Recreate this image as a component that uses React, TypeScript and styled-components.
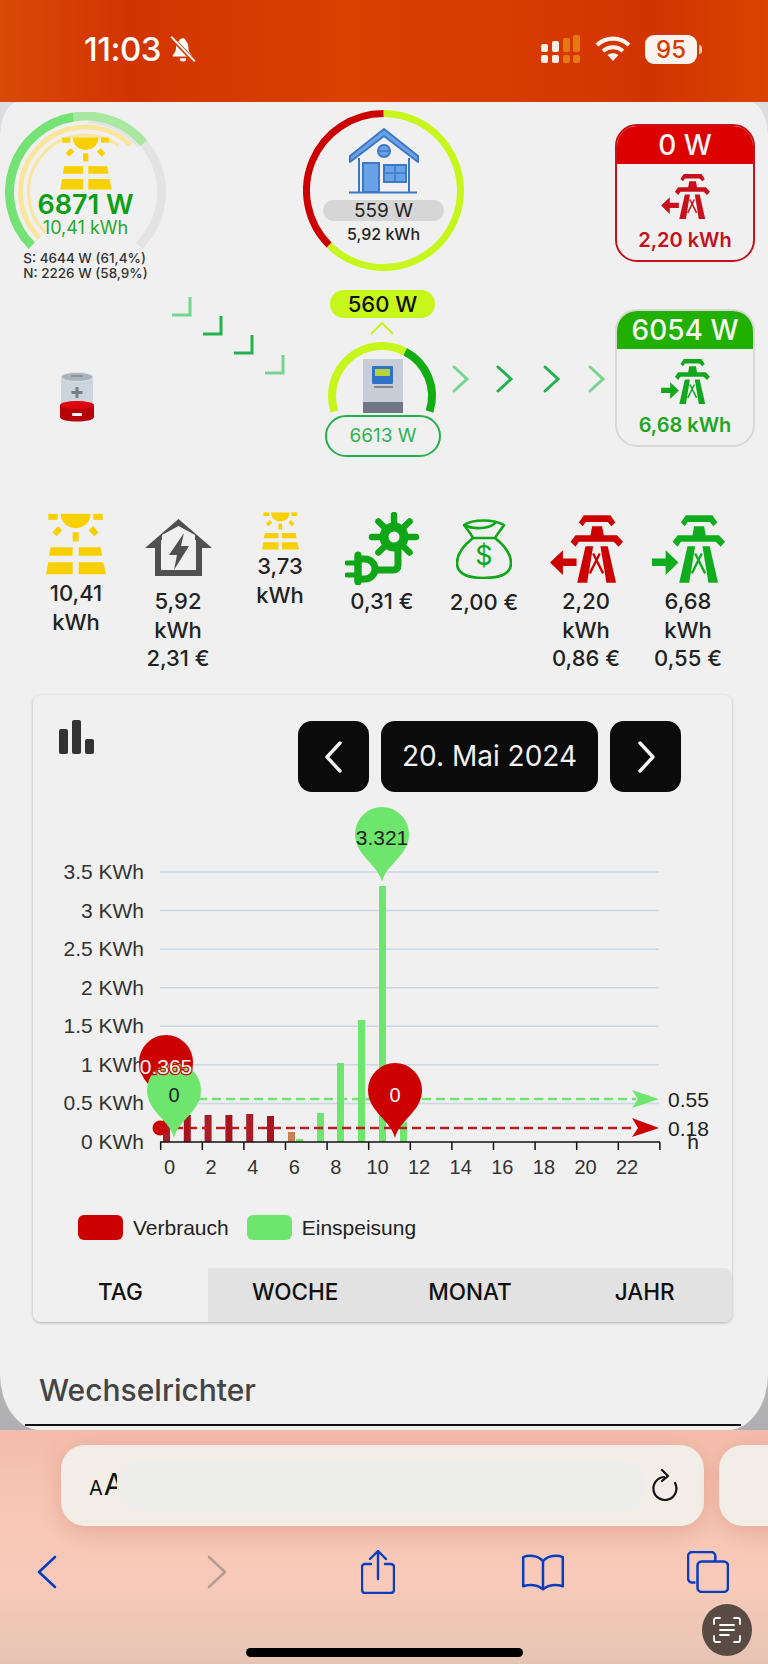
import React from "react";
import styled, { createGlobalStyle } from "styled-components";

const GlobalStyle = createGlobalStyle`
  * { box-sizing: border-box; }
  html, body { margin: 0; padding: 0; background: #b0b0b0; }
  body { font-family: Inter, "Noto Sans", sans-serif; }
`;

const LIME = "#c6f61c";
const GREEN_BAR = "#6ee66e";
const RED = "#cc0000";
const SOLAR = "#f8cf00";
const LINK = "#0a3cc0";

const Screen = styled.div`
  width: 768px;
  height: 1664px;
  overflow: hidden;
  position: relative;
  display: flex;
  flex-direction: column;
  background: linear-gradient(#dcdce2 0, #d4d4d8 60%, #9c9c9c 100%);
`;

/* status bar */
const StatusBar = styled.div`
  height: 102px;
  flex: none;
  display: flex;
  align-items: center;
  padding: 0 71px 4px 84px;
  background: linear-gradient(90deg, #d84a08 0, #d23400 17%, #da4000 45%, #d83c00 65%, #d23400 85%, #d94400 100%);
  color: #fff;
`;
const Clock = styled.span`
  font-size: 33px;
  font-weight: 500;
  letter-spacing: -0.5px;
`;
const BellSlot = styled.span`
  display: flex;
  margin-left: 8px;
  margin-right: auto;
`;
const StatusIcons = styled.div`
  display: flex;
  align-items: center;
  gap: 14px;
`;
const BatteryPill = styled.span`
  width: 52px;
  height: 29px;
  border-radius: 9px;
  background: #faf3ee;
  color: #d63b00;
  font-size: 24px;
  font-weight: 500;
  display: flex;
  align-items: center;
  justify-content: center;
  position: relative;
  &::after {
    content: "";
    position: absolute;
    right: -5px;
    top: 10px;
    width: 3px;
    height: 9px;
    border-radius: 0 3px 3px 0;
    background: #f3c9b2;
  }
`;

/* page */
const Page = styled.div`
  height: 1328px;
  flex: none;
  overflow: hidden;
  background: #f0f0f0;
  border-radius: 18px 18px 40px 40px / 36px 36px 56px 56px;
`;
const Diagram = styled.div`
  position: relative;
  height: 408px;
`;
const FlowArrows = styled.svg`
  position: absolute;
  left: 0;
  top: 0;
`;
const GaugeArt = styled.svg`
  position: absolute;
  left: 0;
  top: 0;
`;
const SolarNode = styled.div`
  position: absolute;
  left: 5px;
  top: 10px;
  width: 161px;
  height: 170px;
  display: flex;
  flex-direction: column;
  align-items: center;
  padding-top: 25px;
`;
const SolarPower = styled.div`
  position: relative;
  margin-top: 1px;
  font-size: 27px;
  line-height: 28px;
  font-weight: 600;
  color: #0a9f14;
`;
const SolarEnergy = styled.div`
  position: relative;
  font-size: 18px;
  line-height: 17px;
  color: #27a827;
`;
const StringLines = styled.div`
  position: relative;
  margin-top: 15px;
  font-size: 13.5px;
  line-height: 15px;
  font-weight: 500;
  white-space: nowrap;
  color: #333;
`;
const HouseNode = styled.div`
  position: absolute;
  left: 303px;
  top: 8px;
  width: 161px;
  height: 161px;
  display: flex;
  flex-direction: column;
  align-items: center;
  padding-top: 17px;
`;
const HousePower = styled.div`
  position: relative;
  margin-top: 6px;
  width: 121px;
  height: 21px;
  border-radius: 11px;
  background: #d6d6d6;
  font-size: 19px;
  line-height: 21px;
  text-align: center;
  color: #222;
`;
const HouseEnergy = styled.div`
  position: relative;
  margin-top: 3px;
  font-size: 16px;
  line-height: 20px;
  font-weight: 500;
  color: #222;
`;
const GridCard = styled.div<{ $top: number; $border: string }>`
  position: absolute;
  left: 615px;
  top: ${(p) => p.$top}px;
  width: 140px;
  height: 138px;
  border-radius: 22px;
  border: 2px solid ${(p) => p.$border};
  overflow: hidden;
  display: flex;
  flex-direction: column;
  align-items: center;
`;
const GridHeader = styled.div<{ $bg: string }>`
  align-self: stretch;
  height: 38px;
  background: ${(p) => p.$bg};
  color: #f4f4f4;
  font-size: 28px;
  font-weight: 500;
  line-height: 38px;
  text-align: center;
`;
const GridIcon = styled.div`
  margin-top: 10px;
  display: flex;
`;
const GridEnergy = styled.div<{ $color: string }>`
  margin-top: 9px;
  font-size: 20px;
  line-height: 24px;
  font-weight: 600;
  color: ${(p) => p.$color};
`;
const LoadPill = styled.div`
  position: absolute;
  left: 330px;
  top: 188px;
  width: 105px;
  height: 28px;
  border-radius: 14px;
  background: ${LIME};
  font-size: 22px;
  font-weight: 500;
  line-height: 28px;
  text-align: center;
  color: #111;
`;
const InverterNode = styled.div`
  position: absolute;
  left: 325px;
  top: 240px;
  width: 116px;
  height: 115px;
  display: flex;
  flex-direction: column;
  align-items: center;
  padding-top: 17px;
`;
const InverterPill = styled.div`
  position: relative;
  margin-top: 2px;
  width: 116px;
  height: 42px;
  flex: none;
  border-radius: 21px;
  border: 2px solid #25b04a;
  background: #f0f0f0;
  font-size: 19px;
  line-height: 38px;
  text-align: center;
  color: #2fb454;
`;
const BatterySlot = styled.div`
  position: absolute;
  left: 60px;
  top: 270px;
  display: flex;
`;

/* daily totals */
const Totals = styled.div`
  display: grid;
  grid-template-columns: repeat(7, 102px);
  padding-left: 25px;
  height: 185px;
`;
const Tile = styled.div<{ $pad: number; $gap: number }>`
  display: flex;
  flex-direction: column;
  align-items: center;
  padding-top: ${(p) => p.$pad}px;
  gap: ${(p) => p.$gap}px;
`;
const TileText = styled.div`
  font-size: 22px;
  line-height: 28.5px;
  font-weight: 500;
  text-align: center;
  color: #222;
`;

/* chart card */
const Card = styled.div`
  margin: 0 36px 0 33px;
  height: 627px;
  border-radius: 8px;
  background: #f0f0f0;
  box-shadow: 0 1px 3px rgba(0, 0, 0, 0.28);
  display: flex;
  flex-direction: column;
`;
const CardHeader = styled.div`
  height: 97px;
  flex: none;
  display: flex;
  padding: 26px 51px 0 26px;
`;
const ChartGlyph = styled.svg`
  margin-right: auto;
  margin-top: -1px;
`;
const DatePager = styled.div`
  display: flex;
  gap: 12px;
`;
const PagerButton = styled.button`
  width: 71px;
  height: 71px;
  border: none;
  border-radius: 14px;
  background: #0b0b0b;
  display: flex;
  align-items: center;
  justify-content: center;
  padding: 0;
`;
const DateLabel = styled.div`
  width: 217px;
  height: 71px;
  border-radius: 14px;
  background: #0b0b0b;
  color: #f2f2f2;
  font-size: 28px;
  line-height: 71px;
  text-align: center;
`;
const ChartSvg = styled.svg`
  flex: none;
  display: block;
  font-family: "Liberation Sans", Arial, sans-serif;
`;
const Legend = styled.div`
  display: flex;
  align-items: center;
  height: 25px;
  margin-top: 13px;
  padding-left: 45px;
  font-family: "Liberation Sans", Arial, sans-serif;
  font-size: 21px;
  color: #222;
`;
const Swatch = styled.span<{ $color: string }>`
  width: 45px;
  height: 25px;
  border-radius: 6px;
  background: ${(p) => p.$color};
  margin-right: 10px;
`;
const LegendName = styled.span`
  margin-right: 18px;
`;
const Tabs = styled.div`
  margin-top: 28px;
  height: 54px;
  display: grid;
  grid-template-columns: repeat(4, 1fr);
  border-radius: 0 8px 8px 8px;
  overflow: hidden;
`;
const Tab = styled.div<{ $active?: boolean }>`
  background: ${(p) => (p.$active ? "#f0f0f0" : "#e2e2e2")};
  font-size: 22.5px;
  font-weight: 500;
  line-height: 48px;
  text-align: center;
  color: #111;
`;
const SectionTitle = styled.div`
  margin: 48px 0 0 39px;
  font-size: 30px;
  line-height: 40px;
  font-weight: 500;
  color: #444;
`;
const SectionRule = styled.div`
  margin: 14px 27px 0 25px;
  height: 1.5px;
  background: #111;
`;

/* browser chrome */
const BrowserBar = styled.div`
  flex: 1;
  position: relative;
  padding-top: 15px;
  background: linear-gradient(#f3bcaa 0, #f8c6b5 30%, #f8cab9 65%, #e6c4b4 100%);
`;
const UrlRow = styled.div`
  display: flex;
  gap: 15px;
  height: 81px;
  padding-left: 61px;
  margin-right: -40px;
`;
const UrlBar = styled.div`
  width: 643px;
  flex: none;
  display: flex;
  align-items: center;
  padding-left: 28px;
  border-radius: 24px;
  background: #f3ede7;
  box-shadow: 0 6px 22px rgba(190, 110, 85, 0.32);
`;
const NextTab = styled(UrlBar)`
  width: 100px;
`;
const ReaderLabel = styled.span`
  width: 28px;
  flex: none;
  overflow: hidden;
  display: flex;
  align-items: baseline;
  font-size: 20px;
  line-height: 34px;
  color: #111;
  white-space: nowrap;
`;
const ReaderLarge = styled.span`
  font-size: 30px;
  margin-left: 1px;
`;
const UrlField = styled.div`
  width: 528px;
  height: 50px;
  flex: none;
  border-radius: 22px;
  background: #ededec;
`;
const ReloadSlot = styled.span`
  display: flex;
  margin-left: 6px;
`;
const Toolbar = styled.div`
  display: flex;
  justify-content: space-between;
  height: 44px;
  margin-top: 24px;
  padding: 0 42px 0 29px;
`;
const ToolSlot = styled.span`
  width: 36px;
  display: flex;
  align-items: center;
  justify-content: center;
`;
const HomeBar = styled.div`
  width: 277px;
  height: 9px;
  margin: 54px auto 0;
  border-radius: 5px;
  background: #000;
`;
const ScanBadge = styled.div`
  position: absolute;
  left: 702px;
  top: 174px;
  width: 50px;
  height: 52px;
  border-radius: 50%;
  background: #594a44;
  display: flex;
  align-items: center;
  justify-content: center;
`;

/* drawings */
function polar(cx: number, cy: number, r: number, deg: number) {
  const a = (deg * Math.PI) / 180;
  return [cx + r * Math.sin(a), cy - r * Math.cos(a)];
}
function arc(cx: number, cy: number, r: number, from: number, to: number) {
  const [x0, y0] = polar(cx, cy, r, from);
  const [x1, y1] = polar(cx, cy, r, to);
  return `M${x0.toFixed(2)} ${y0.toFixed(2)}A${r} ${r} 0 ${to - from > 180 ? 1 : 0} 1 ${x1.toFixed(2)} ${y1.toFixed(2)}`;
}

const SolarIcon = ({ width, height }: { width: number; height: number }) => (
  <svg width={width} height={height} viewBox="0 0 180 185" style={{ position: "relative", flex: "none" }}>
    <g fill={SOLAR}>
      <path d="M44 2h90c-1 26-20 43-45 43S45 28 44 2z" />
      <rect x="7" y="2" width="28" height="18" />
      <rect x="142" y="2" width="28" height="18" />
      <rect x="80" y="57" width="18" height="28" />
      <path d="M36 39l13 12-17 18-13-12zM141 39l-13 12 17 18 13-12z" />
      <path d="M14 102h66v26H9zM98 102h66l5 26H98zM7 147h73v36H0zM98 147h74l8 36H98z" />
    </g>
  </svg>
);

const TowerIcon = ({ color, out, width, height }: { color: string; out?: boolean; width: number; height: number }) => (
  <svg width={width} height={height} viewBox="498 75 220 203">
    <g fill={color}>
      <path d="M600 75h80l15 22-12 11-11-13h-67l-8 13-12-11z" />
      <path d="M625 108h30l5 27h40l18 20-13 15-15-15H585l-10 15-15-15 15-20h45z" />
      <path d="M605 168h23l-18 110h-30zM650 168h22l25 110h-29z" />
      {out ? <path d="M498 217l39-37v25h41v23h-41v27z" /> : <path d="M578 217l-39-37v25h-41v23h41v27z" />}
    </g>
    <path d="M628 190l30 60M648 190l-30 60" stroke={color} strokeWidth="7" fill="none" />
  </svg>
);

const BlueHouse = () => (
  <svg width="70" height="67" viewBox="0 0 70 67" style={{ position: "relative", flex: "none" }}>
    <path d="M1 29L35 2l34 27v6L35 9 1 35z" fill="#6aa2e8" stroke="#3c78c4" strokeWidth="2" strokeLinejoin="round" />
    <path d="M10 31v34M60 31v34M0 65.5h68" stroke="#3c78c4" strokeWidth="2" fill="none" />
    <circle cx="35" cy="24" r="6" fill="#6aa2e8" stroke="#3c78c4" strokeWidth="2" />
    <path d="M29 24h12" stroke="#3c78c4" strokeWidth="1.5" />
    <rect x="14" y="36" width="16" height="29" fill="#6aa2e8" stroke="#3c78c4" strokeWidth="2" />
    <rect x="35" y="38" width="22" height="17" fill="#6aa2e8" stroke="#3c78c4" strokeWidth="2" />
    <path d="M46 38v17M35 46h22" stroke="#3c78c4" strokeWidth="1.5" />
  </svg>
);

const InverterIcon = () => (
  <svg width="40" height="54" viewBox="0 0 40 54" style={{ position: "relative", flex: "none" }}>
    <rect width="40" height="54" fill="#c7ced8" />
    <rect y="43" width="40" height="11" fill="#6e7783" />
    <rect x="9" y="7" width="21" height="18" rx="1" fill="#2f72c8" />
    <rect x="12" y="10" width="15" height="7" fill="#b8d43a" />
    <rect x="11" y="27" width="19" height="2" fill="#7d8793" />
  </svg>
);

const BatteryIcon = () => (
  <svg width="34" height="50" viewBox="0 0 34 50">
    <path d="M1 5h32v30H1z" fill="#ccd5de" />
    <ellipse cx="17" cy="5" rx="16" ry="4.5" fill="#a9b3bc" stroke="#dbe1e6" />
    <rect x="11" y="3" width="12" height="2" fill="#8b959e" />
    <path d="M17 15v11M11.5 20.5h11" stroke="#737e89" strokeWidth="3" />
    <path d="M0 33v12c0 6 34 6 34 0V33z" fill="#b80008" />
    <ellipse cx="17" cy="33" rx="17" ry="4" fill="#dd0410" />
    <rect x="12" y="41" width="10" height="3" rx="1" fill="#f6f6f6" />
  </svg>
);

const HomeBolt = () => (
  <svg width="67" height="57" viewBox="0 0 67 57">
    <path d="M33.5 0L67 29H57v28H10V29H0z" fill="#505050" />
    <rect x="16" y="21" width="35" height="30" fill="#f0f0f0" />
    <path d="M17 16L33.5 7 50 16v8H17z" fill="#f0f0f0" />
    <path d="M39 14L24 36h8l-3 15 15-24h-8z" fill="#505050" />
  </svg>
);

const PlugSun = () => (
  <svg width="74" height="73" viewBox="345 512 74 73">
    <g stroke="#0fa618" fill="none" strokeLinecap="round">
      <circle cx="394" cy="537" r="10" strokeWidth="9" />
      {[0, 45, 90, 135, 225, 270, 315].map((a) => {
        const [x0, y0] = polar(394, 537, 13, a);
        const [x1, y1] = polar(394, 537, 22, a);
        return <path key={a} d={`M${x0} ${y0}L${x1} ${y1}`} strokeWidth="6.500" />;
      })}
      <path d="M378 570h15q5 0 5-5V549" strokeWidth="7" />
      <path d="M347 563h10M347 575h10" strokeWidth="5" />
      <path d="M358 555v27" strokeWidth="7" />
    </g>
    <path d="M358 559h7a10 10 0 010 20h-7z" fill="none" stroke="#0fa618" strokeWidth="7" />
  </svg>
);

const MoneyBag = () => (
  <svg width="56" height="60" viewBox="0 0 56 60" fill="none" stroke="#0fa618" strokeWidth="2.6" strokeLinejoin="round">
    <path d="M8 6c9-6 30-6 40 0-3 5-7 9-9 13H17C15 15 11 10 8 6z" />
    <path d="M8 6c10 5 27 4 32-3" />
    <path d="M17 19C8 26 1 35 1 44c0 10 9 15 27 15s27-5 27-15c0-9-7-18-16-25" />
    <text x="28" y="46" fontSize="27" fontFamily="Inter, sans-serif" fill="#0fa618" stroke="none" textAnchor="middle">$</text>
  </svg>
);

const pin = (cx: number, tip: number) => {
  const cy = tip - 48;
  return `M${cx} ${tip}C${cx - 4} ${tip - 18} ${cx - 27} ${tip - 26} ${cx - 27} ${cy}A27 27 0 1 1 ${cx + 27} ${cy}C${cx + 27} ${tip - 26} ${cx + 4} ${tip - 18} ${cx} ${tip}Z`;
};

const yTicks = ["0", "0.5", "1", "1.5", "2", "2.5", "3", "3.5"];
const redBars = [1115, 1115, 1115, 1115, 1114, 1116];
const greenBars: [number, number][] = [
  [296, 1139],
  [317, 1113],
  [337, 1063],
  [358, 1020],
  [379, 886],
  [400, 1122],
];

const Chart = () => (
  <ChartSvg width="699" height="410" viewBox="33 792 699 410">
    {yTicks.map((t, i) => {
      const y = 1142 - i * 38.57;
      return (
        <g key={t}>
          {i > 0 && <line x1="160" x2="659" y1={y} y2={y} stroke="#ccd6e4" strokeWidth="1.5" />}
          <text x="144" y={y + 7} textAnchor="end" fontSize="21" fill="#333">{t} KWh</text>
        </g>
      );
    })}
    {redBars.map((top, i) => (
      <rect key={i} x={163 + i * 20.8} y={top} width="7" height={1142 - top} fill={i % 2 ? "#a8141e" : "#a81e28"} />
    ))}
    <rect x="288" y="1132" width="7" height="10" fill="#c97f50" />
    {greenBars.map(([x, top]) => (
      <rect key={x} x={x} y={top} width="7" height={1142 - top} fill={GREEN_BAR} />
    ))}
    <line x1="160" x2="660" y1="1142" y2="1142" stroke="#111" strokeWidth="1.5" />
    {Array.from({ length: 13 }, (_, i) => (
      <line key={i} x1={160.7 + i * 41.6} x2={160.7 + i * 41.6} y1="1142" y2="1150" stroke="#111" strokeWidth="1.5" />
    ))}
    {Array.from({ length: 12 }, (_, i) => (
      <text key={i} x={169.5 + i * 41.6} y="1174" textAnchor="middle" fontSize="20" fill="#333">{i * 2}</text>
    ))}

    <line x1="170" x2="636" y1="1099" y2="1099" stroke={GREEN_BAR} strokeWidth="2.5" strokeDasharray="9 5" />
    <path d="M659 1099l-27-9 6 9-6 9z" fill={GREEN_BAR} />
    <text x="668" y="1107" fontSize="21" fill="#222">0.55</text>
    <circle cx="160" cy="1128" r="7.5" fill={RED} />
    <line x1="160" x2="636" y1="1128" y2="1128" stroke="#b81d24" strokeWidth="2.5" strokeDasharray="9 5" />
    <path d="M659 1128l-27-10 6 10-6 9z" fill={RED} />
    <text x="668" y="1136" fontSize="21" fill="#222">0.18</text>
    <text x="693" y="1149" fontSize="21" textAnchor="middle" fill="#222">h</text>

    <path d={pin(166, 1110)} fill={RED} />
    <path d={pin(174, 1138)} fill={GREEN_BAR} />
    <text x="166" y="1074" textAnchor="middle" fontSize="21" fill="#f6f6f6" stroke={RED} strokeWidth="2.5" style={{ paintOrder: "stroke" }}>0.365</text>
    <text x="174" y="1102" textAnchor="middle" fontSize="20" fill="#222">0</text>
    <path d={pin(395, 1138)} fill={RED} />
    <text x="395" y="1102" textAnchor="middle" fontSize="20" fill="#f6f6f6">0</text>
    <path d={pin(382, 882)} fill={GREEN_BAR} />
    <text x="382" y="845" textAnchor="middle" fontSize="21" fill="#222">3.321</text>
  </ChartSvg>
);

const Chevron = ({ d }: { d: string }) => (
  <svg width="22" height="38" viewBox="0 0 22 38" fill="none" stroke="#f4f4f4" strokeWidth="3.4" strokeLinecap="round" strokeLinejoin="round">
    <path d={d} />
  </svg>
);

const bellPaths = (
  <svg width="28" height="28" viewBox="0 0 26 26" fill="#fff">
    <path d="M13 3c-2 0-3 1-3.600 2.400C7.500 6.500 6.500 9 6.500 12c0 3-1.500 5-3 6.500V20H21v-1.500c-1.500-1.500-3-3.500-3-6.500 0-3-1-5.500-2.500-6.600C15 4 15 3 13 3z" />
    <path d="M10 21.500h6a3 3 0 01-6 0z" />
    <path d="M2 2L24 25" stroke="#d63a00" strokeWidth="4" />
    <path d="M2 1.500L24 24.500" stroke="#fff" strokeWidth="1.800" />
  </svg>
);

const Signal = () => (
  <svg width="40" height="29" viewBox="0 0 40 29">
    {[
      [0, "#fbeee6", 9],
      [11, "#fbeee6", 6],
      [22, "#e67a12", 3],
      [32, "#e67a12", 0],
    ].map(([x, c, top]) => (
      <g key={x as number} fill={c as string}>
        <rect x={x as number} y={top as number} width="7" height={17 - (top as number)} rx="2" />
        <rect x={x as number} y="20" width="7" height="8" rx="2" />
      </g>
    ))}
  </svg>
);

const Wifi = () => (
  <svg width="36" height="26" viewBox="0 0 36 26" fill="none" stroke="#fbf3ee" strokeWidth="4.200">
    <path d="M2 9c9-8.500 23-8.500 32 0" />
    <path d="M8 15c6-5 14-5 20 0" />
    <path d="M18 25l-5.500-6c3-2.500 8-2.500 11 0z" fill="#fbf3ee" stroke="none" />
  </svg>
);

export default function App() {
  return (
    <Screen>
      <GlobalStyle />
      <StatusBar>
        <Clock>11:03</Clock>
        <BellSlot>{bellPaths}</BellSlot>
        <StatusIcons>
          <Signal />
          <Wifi />
          <BatteryPill>95</BatteryPill>
        </StatusIcons>
      </StatusBar>

      <Page>
        <Diagram>
          <FlowArrows width="768" height="408" viewBox="0 102 768 408" fill="none" strokeWidth="3">
            <path d="M172 315h18v-18" stroke="#74d68e" />
            <path d="M203 334h18v-18" stroke="#22b14c" />
            <path d="M234 353h18v-18" stroke="#22b14c" />
            <path d="M265 373h18v-18" stroke="#74d68e" />
            <path d="M454 367l13 12-13 12" stroke="#74d68e" strokeLinecap="round" />
            <path d="M498 367l13 12-13 12" stroke="#22b14c" strokeLinecap="round" />
            <path d="M545 367l13 12-13 12" stroke="#22b14c" strokeLinecap="round" />
            <path d="M590 367l13 12-13 12" stroke="#74d68e" strokeLinecap="round" />
            <path d="M371 334l11-11 11 11" stroke={LIME} strokeWidth="2" />
          </FlowArrows>

          <SolarNode>
            <GaugeArt width="161" height="170" viewBox="5 112 161 170" fill="none">
              <path d={arc(85.5, 192, 76, 50, 135)} stroke="#e3e3e3" strokeWidth="9" />
              <path d={arc(85.5, 192, 70, 2, 50)} stroke="#e3e3e3" strokeWidth="3" />
              <path d={arc(85.5, 192, 76, -135, -9)} stroke="#74e274" strokeWidth="9" />
              <path d={arc(85.5, 192, 76, -9, 50)} stroke="#a8e8a0" strokeWidth="9" />
              <path d={arc(85.5, 192, 65, -135, 44)} stroke="#f9e59c" strokeWidth="5" />
              <path d={arc(85.5, 192, 57, -135, 35)} stroke="#f9e59c" strokeWidth="3" />
            </GaugeArt>
            <SolarIcon width={52} height={53} />
            <SolarPower>6871 W</SolarPower>
            <SolarEnergy>10,41 kWh</SolarEnergy>
            <StringLines>
              S: 4644 W (61,4%)
              <br />
              N: 2226 W (58,9%)
            </StringLines>
          </SolarNode>

          <HouseNode>
            <GaugeArt width="161" height="161" viewBox="0 0 161 161" fill="none">
              <path d={arc(80.5, 80.5, 77, 0, 225)} stroke={LIME} strokeWidth="7" />
              <path d={arc(80.5, 80.5, 77, 225, 360)} stroke={RED} strokeWidth="7" />
            </GaugeArt>
            <BlueHouse />
            <HousePower>559 W</HousePower>
            <HouseEnergy>5,92 kWh</HouseEnergy>
          </HouseNode>

          <GridCard $top={22} $border="#c4121c">
            <GridHeader $bg="#dd0000">0 W</GridHeader>
            <GridIcon>
              <TowerIcon color="#c8101c" out width={49} height={45} />
            </GridIcon>
            <GridEnergy $color="#c4101c">2,20 kWh</GridEnergy>
          </GridCard>

          <LoadPill>560 W</LoadPill>

          <InverterNode>
            <GaugeArt width="116" height="80" viewBox="325 342 116 80" fill="none">
              <path d={arc(382, 396, 50, 27.5, 108)} stroke="#12ad12" strokeWidth="8" />
              <path d={arc(382, 396, 50, -108, 27.5)} stroke={LIME} strokeWidth="8" />
            </GaugeArt>
            <InverterIcon />
            <InverterPill>6613 W</InverterPill>
          </InverterNode>

          <BatterySlot>
            <BatteryIcon />
          </BatterySlot>

          <GridCard $top={207} $border="#d8d8d8">
            <GridHeader $bg="#22b000">6054 W</GridHeader>
            <GridIcon>
              <TowerIcon color="#12a81e" width={49} height={45} />
            </GridIcon>
            <GridEnergy $color="#1fa51f">6,68 kWh</GridEnergy>
          </GridCard>
        </Diagram>

        <Totals>
          <Tile $pad={3} $gap={4}>
            <SolarIcon width={60} height={62} />
            <TileText>10,41<br />kWh</TileText>
          </Tile>
          <Tile $pad={9} $gap={11}>
            <HomeBolt />
            <TileText>5,92<br />kWh<br />2,31 €</TileText>
          </Tile>
          <Tile $pad={2} $gap={2}>
            <SolarIcon width={37} height={38} />
            <TileText>3,73<br />kWh</TileText>
          </Tile>
          <Tile $pad={2} $gap={2}>
            <PlugSun />
            <TileText>0,31 €</TileText>
          </Tile>
          <Tile $pad={9} $gap={9}>
            <MoneyBag />
            <TileText>2,00 €</TileText>
          </Tile>
          <Tile $pad={5} $gap={4}>
            <TowerIcon color={RED} out width={73} height={68} />
            <TileText>2,20<br />kWh<br />0,86 €</TileText>
          </Tile>
          <Tile $pad={5} $gap={4}>
            <TowerIcon color="#0fac1e" width={73} height={68} />
            <TileText>6,68<br />kWh<br />0,55 €</TileText>
          </Tile>
        </Totals>

        <Card>
          <CardHeader>
            <ChartGlyph width="36" height="34" viewBox="0 0 36 34" fill="#333">
              <rect x="0" y="9" width="9" height="25" rx="2" />
              <rect x="13" y="0" width="9" height="34" rx="2" />
              <rect x="26" y="19" width="9" height="15" rx="2" />
            </ChartGlyph>
            <DatePager>
              <PagerButton>
                <Chevron d="M17 5L4 19l13 14" />
              </PagerButton>
              <DateLabel>20. Mai 2024</DateLabel>
              <PagerButton>
                <Chevron d="M5 5l13 14L5 33" />
              </PagerButton>
            </DatePager>
          </CardHeader>
          <Chart />
          <Legend>
            <Swatch $color={RED} />
            <LegendName>Verbrauch</LegendName>
            <Swatch $color={GREEN_BAR} />
            <LegendName>Einspeisung</LegendName>
          </Legend>
          <Tabs>
            <Tab $active>TAG</Tab>
            <Tab>WOCHE</Tab>
            <Tab>MONAT</Tab>
            <Tab>JAHR</Tab>
          </Tabs>
        </Card>

        <SectionTitle>Wechselrichter</SectionTitle>
        <SectionRule />
      </Page>

      <BrowserBar>
        <UrlRow>
          <UrlBar>
            <ReaderLabel>A<ReaderLarge>A</ReaderLarge></ReaderLabel>
            <UrlField />
            <ReloadSlot>
              <svg width="28" height="34" viewBox="0 0 28 34" fill="none" stroke="#111" strokeWidth="2.2" strokeLinecap="round" strokeLinejoin="round">
                <path d="M13 8a11.500 11.500 0 1 0 11 6" />
                <path d="M11 1l6 6-6 5" />
              </svg>
            </ReloadSlot>
          </UrlBar>
          <NextTab />
        </UrlRow>
        <Toolbar>
          <ToolSlot>
            <svg width="20" height="34" viewBox="0 0 20 34" fill="none" stroke={LINK} strokeWidth="2.6" strokeLinecap="round" strokeLinejoin="round">
              <path d="M18 2L2 17l16 15" />
            </svg>
          </ToolSlot>
          <ToolSlot>
            <svg width="20" height="34" viewBox="0 0 20 34" fill="none" stroke="#b39c90" strokeWidth="2.6" strokeLinecap="round" strokeLinejoin="round" style={{ marginLeft: 10 }}>
              <path d="M2 2l16 15L2 32" />
            </svg>
          </ToolSlot>
          <ToolSlot>
            <svg width="34" height="44" viewBox="0 0 34 44" fill="none" stroke={LINK} strokeWidth="2.4" strokeLinecap="round" strokeLinejoin="round">
              <path d="M10 14H4a3 3 0 00-3 3v23a3 3 0 003 3h26a3 3 0 003-3V17a3 3 0 00-3-3h-6" />
              <path d="M17 29V2M9 9l8-8 8 8" />
            </svg>
          </ToolSlot>
          <ToolSlot>
            <svg width="44" height="37" viewBox="1.5 0 41 35.5" fill="none" stroke={LINK} strokeWidth="2.400" strokeLinejoin="round" style={{ flex: "none" }}>
              <path d="M22 7C17 1 8 1 3 3v28c6-2 14-2 19 3 5-5 13-5 19-3V3c-5-2-14-2-19 4zM22 7v27" />
            </svg>
          </ToolSlot>
          <ToolSlot>
            <svg width="42" height="42" viewBox="0 0 40 40" fill="none" stroke={LINK} strokeWidth="2.400" strokeLinejoin="round" style={{ flex: "none" }}>
              <path d="M8 30H5a4 4 0 01-4-4V5a4 4 0 014-4h18a4 4 0 014 4v5" />
              <rect x="10" y="10" width="29" height="29" rx="4" />
            </svg>
          </ToolSlot>
        </Toolbar>
        <HomeBar />
        <ScanBadge>
          <svg width="28" height="26" viewBox="0 0 28 26" fill="none" stroke="#fff" strokeWidth="1.800" strokeLinecap="round">
            <path d="M1 7V3a2 2 0 012-2h4M21 1h4a2 2 0 012 2v4M27 19v4a2 2 0 01-2 2h-4M7 25H3a2 2 0 01-2-2v-4" />
            <path d="M7 8h14M7 13h14M7 18h9" />
          </svg>
        </ScanBadge>
      </BrowserBar>
    </Screen>
  );
}
